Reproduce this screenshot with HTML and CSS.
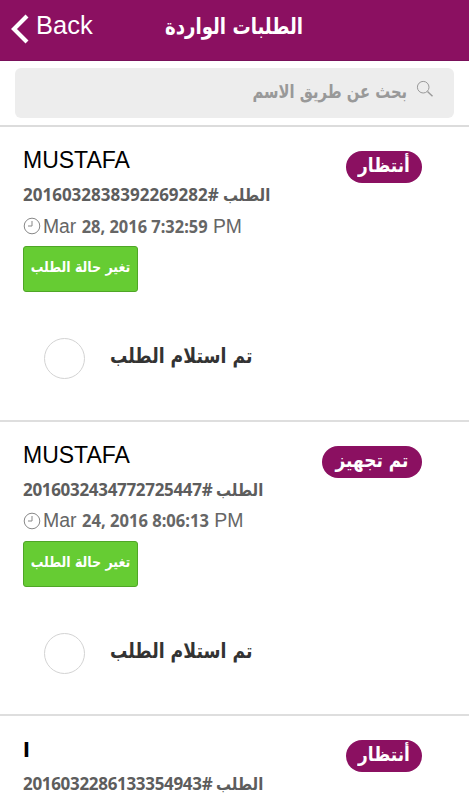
FILE: index.html
```
<!DOCTYPE html>
<html lang="ar">
<head>
<meta charset="utf-8">
<title>الطلبات الواردة</title>
<link rel="stylesheet" href="styles.css">
</head>
<body>
<header class="bar">
  <a class="back"><svg width="18" height="30" viewBox="0 0 18 30"><path d="M16 2 3 15l13 13" fill="none" stroke="#fff" stroke-width="4.2"/></svg><span>Back</span></a>
  <h1 dir="rtl">الطلبات الواردة</h1>
</header>
<div class="search-wrap">
  <div class="search" dir="rtl">
    <svg width="18" height="18" viewBox="0 0 18 18" fill="none" stroke="#999"><circle cx="7.2" cy="7.2" r="5.8"/><path d="m11.5 11.5 5 4.7" stroke-width="1.4"/></svg>
    <span>بحث عن طريق الاسم</span>
  </div>
</div>
<main>
  <section class="order">
    <div class="badge wait"><span dir="rtl">أنتظار</span></div>
    <h2>MUSTAFA</h2>
    <p class="number"><bdi dir="rtl"><span class="word">الطلب</span> #&rlm;2016032838392269282</bdi></p>
    <p class="date"><svg width="18" height="18" viewBox="0 0 18 18" fill="none" stroke="#888"><circle cx="9" cy="9" r="7.8"/><path d="M9 4v5H5"/></svg><span>Mar <b>28, 2016 7:32:59</b> PM</span></p>
    <button class="change"><span dir="rtl">تغير حالة الطلب</span></button>
    <div class="option"><i class="radio"></i><span dir="rtl">تم استلام الطلب</span></div>
  </section>
  <section class="order">
    <div class="badge ready"><span dir="rtl">تم تجهيز</span></div>
    <h2>MUSTAFA</h2>
    <p class="number tight"><bdi dir="rtl"><span class="word">الطلب</span> #&rlm;2016032434772725447</bdi></p>
    <p class="date later"><svg width="18" height="18" viewBox="0 0 18 18" fill="none" stroke="#888"><circle cx="9" cy="9" r="7.8"/><path d="M9 4v5H5"/></svg><span>Mar <b>24, 2016 8:06:13</b> PM</span></p>
    <button class="change"><span dir="rtl">تغير حالة الطلب</span></button>
    <div class="option"><i class="radio"></i><span dir="rtl">تم استلام الطلب</span></div>
  </section>
  <section class="order last">
    <div class="badge wait"><span dir="rtl">أنتظار</span></div>
    <h2 class="ar">ا</h2>
    <p class="number tight"><bdi dir="rtl"><span class="word">الطلب</span> #&rlm;2016032286133354943</bdi></p>
  </section>
</main>
</body>
</html>
```
FILE: styles.css
```
* { box-sizing: border-box; margin: 0; padding: 0; }
html, body { height: 800px; overflow: hidden; }
body { background: #fff; font-family: "Liberation Sans", "DejaVu Sans", sans-serif; }
.bar { height: 61px; background: #8b1061; color: #fff; display: grid; grid-template-columns: 164px 139px 1fr; border-bottom: 1px solid #79105a; }
.back { display: flex; padding-left: 11px; font-size: 25.5px; line-height: 30px; }
.back svg { margin-top: 14px; }
.back span { margin: 10px 0 0 7px; }
.bar h1 { font: bold 22px/30px "DejaVu Sans", sans-serif; white-space: nowrap; margin-top: 12px; transform: scaleX(.825); transform-origin: right; }
.search-wrap { height: 66px; padding: 7px 15px 8px; border-bottom: 2px solid #dcdcdc; }
.search { height: 50px; background: #ededed; border-radius: 6px; display: flex; padding: 12px 20px 0 0; color: #999; }
.search span { font: bold 19px/22px "DejaVu Sans", sans-serif; margin-right: 9px; white-space: nowrap; transform: scaleX(.777); transform-origin: right; }
.order { position: relative; height: 294.5px; padding: 20px 24px 0; border-bottom: 2px solid #dedede; }
.order.last { height: 84px; border: 0; }
.order h2 { font-weight: 400; font-size: 23px; line-height: 27px; color: #000; margin-left: -1px; }
.order h2.ar { font: bold 20px/29px "DejaVu Sans", sans-serif; height: 27px; }
.number { height: 25px; margin-top: 8px; font: bold 17px/25px "Noto Sans", "DejaVu Sans", sans-serif; color: #5d5d5d; white-space: nowrap; margin-left: -1px; }
.number bdi { display: inline-block; }
.number.tight { letter-spacing: -.32px; }
.word { display: inline-block; letter-spacing: 0; transform: scaleX(.88); transform-origin: left; }
.date { height: 30px; margin-top: 4px; display: flex; align-items: center; font-size: 20px; color: #666; white-space: nowrap; margin-left: -1px; }
.date b { font: bold 17px "Noto Sans", sans-serif; }
.date svg { margin-right: 2px; }
.date span { transform: scaleX(.967); transform-origin: left; }
.date.later span { transform: scaleX(.975); }
.change { display: block; width: 115px; height: 46px; margin: 5px 0 0 -1px; background: #66cc33; border: 1px solid #4fa626; border-radius: 3px; color: #fff; font: bold 14.5px/20px "DejaVu Sans", sans-serif; white-space: nowrap; }
.change span { display: block; width: 115px; margin: -4px 0 0 -1px; transform: scaleX(.87); }
.option { display: flex; height: 42px; margin: 46px 0 0 20px; color: #333; }
.radio { width: 41px; height: 41px; border: 1px solid #d3d3d3; border-radius: 50%; }
.option span { margin-left: 25px; font: bold 20.5px/36px "DejaVu Sans", sans-serif; white-space: nowrap; transform: scaleX(.843); transform-origin: left; }
.badge { position: absolute; right: 47px; top: 24px; height: 32px; border-radius: 16px; background: #8b1061; color: #fff; font: bold 19.5px/29px "DejaVu Sans", sans-serif; text-align: center; white-space: nowrap; }
.badge span { display: block; transform: scaleX(.87); }
.wait { width: 76px; }
.ready { width: 100px; }
```
